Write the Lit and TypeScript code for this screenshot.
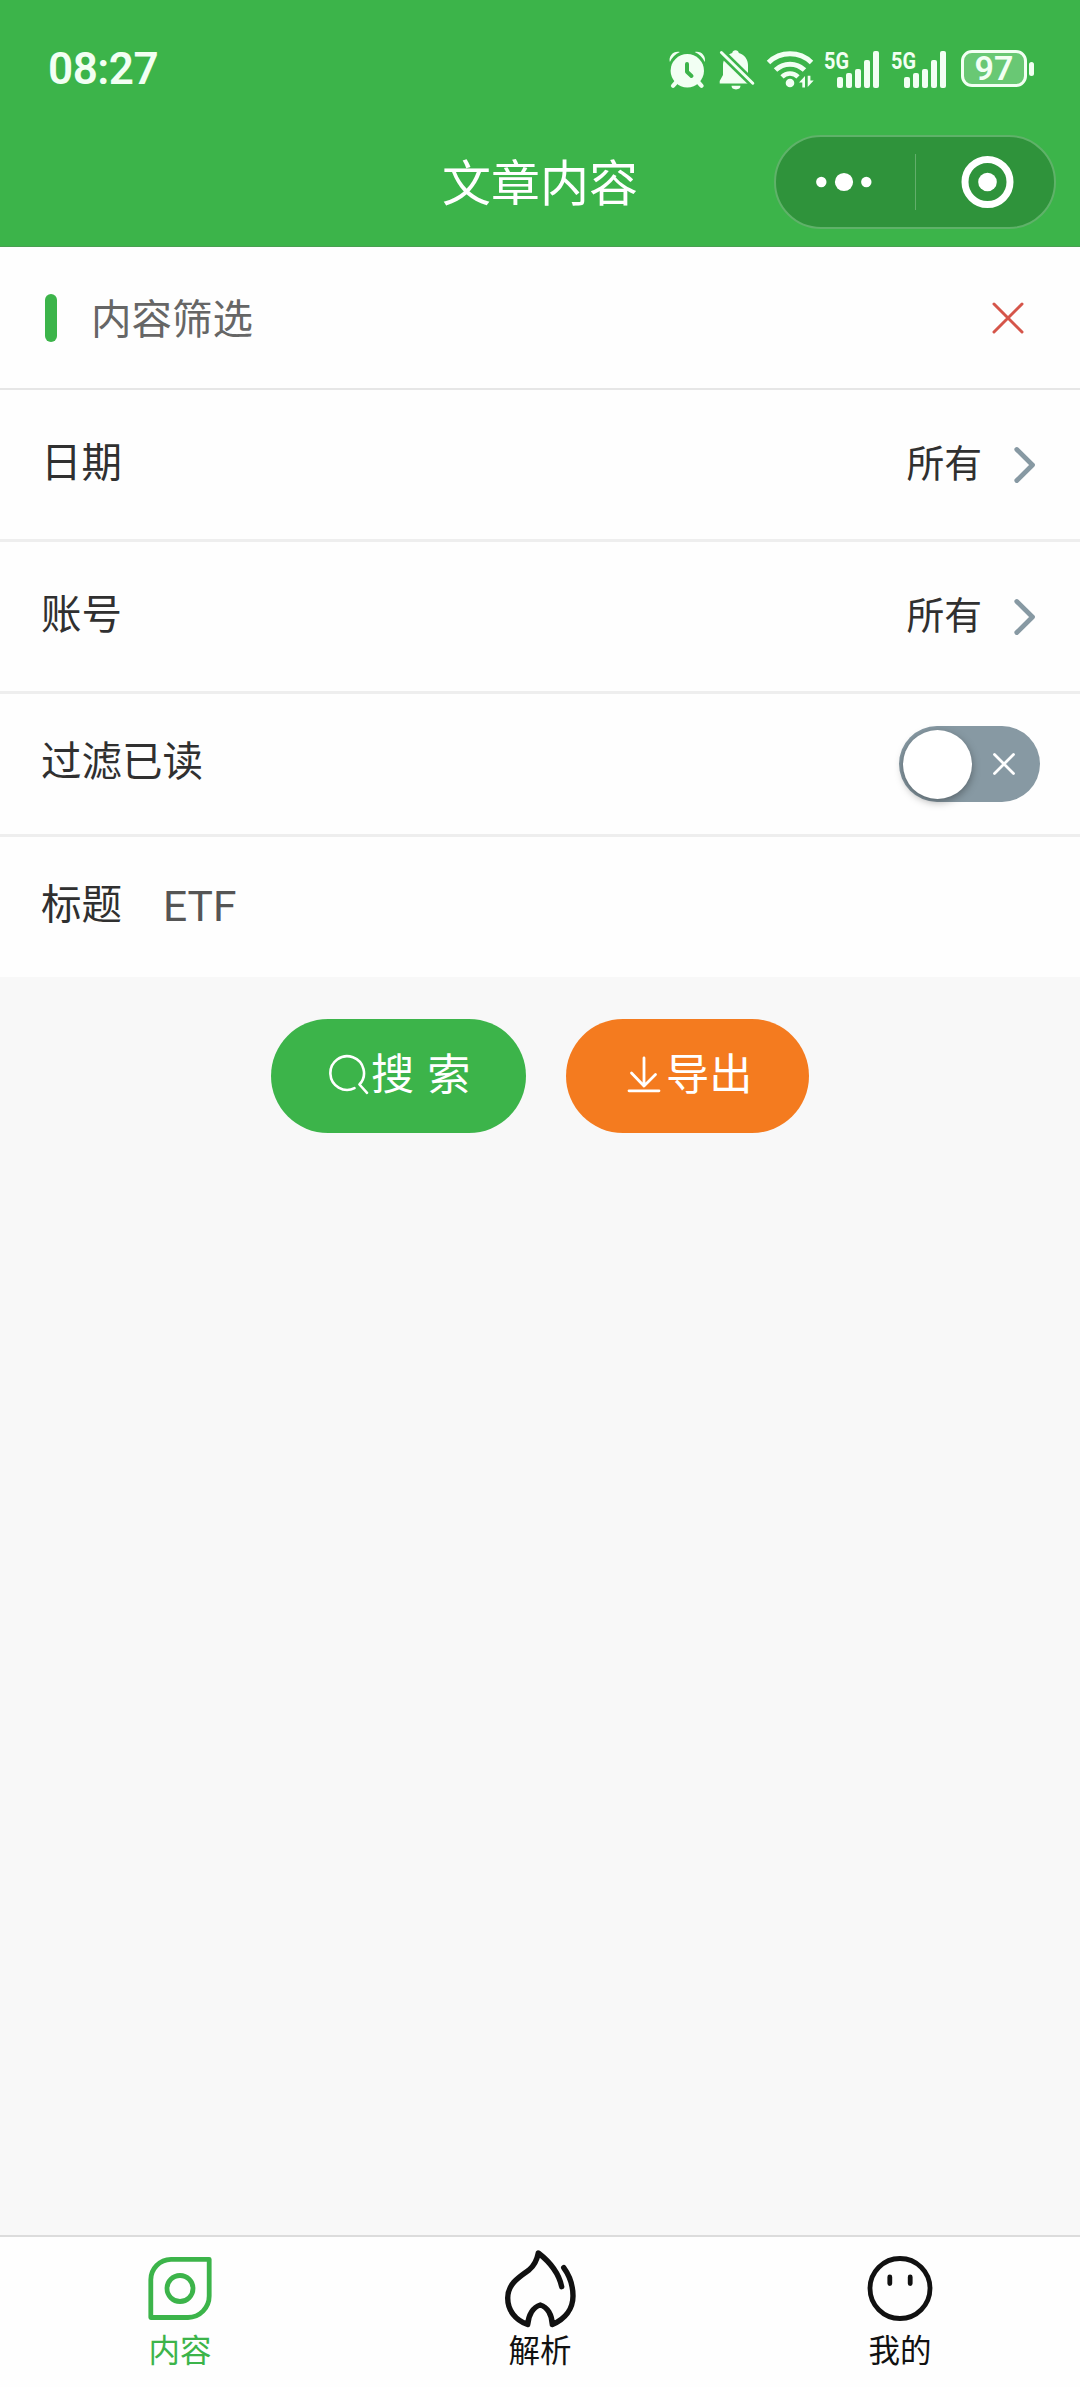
import { LitElement, html, css, svg } from "lit";
import { customElement, property } from "lit/decorators.js";

const alarmIcon = html`<svg width="40" height="40" viewBox="0 0 40 40">
  <g fill="#f2fff3">
    <circle cx="19.300" cy="21.700" r="16.700" />
    <path d="M1.900 13C.1 7 5.700 1.400 11.900 3a20 20 0 0 0-10 10z" />
    <path d="M36.700 13C38.500 7 32.900 1.400 26.700 3a20 20 0 0 1 10 10z" />
  </g>
  <path d="M8 33.500L5 36.800M30.600 33.500L33.600 36.800" stroke="#f2fff3" stroke-width="4.200" stroke-linecap="round" />
  <path d="M19 15V22.800L23.500 27" fill="none" stroke="#3cb44a" stroke-width="4" stroke-linecap="round" stroke-linejoin="round" />
</svg>`;

const bellIcon = html`<svg width="38" height="42" viewBox="0 0 38 42">
  <path fill="#f2fff3" d="M16.500 2.200a3.400 3.400 0 0 1 3.300 2.700C25.500 6.500 29 11.300 29 17v9.500l3 6v3H.7v-2.500L4 27V17C4 11.300 7.800 6.500 13.200 4.900a3.400 3.400 0 0 1 3.300-2.700zM12.500 37.800h9a4.500 3.600 0 0 1-9 0z" />
  <path d="M0 2.200L37 38.400" stroke="#3cb44a" stroke-width="8.200" />
  <path d="M2.400 4.500L33.800 35.200" stroke="#f2fff3" stroke-width="3" stroke-linecap="round" />
</svg>`;

const wifiIcon = html`<svg width="48" height="40" viewBox="0 0 48 40">
  <g fill="none" stroke="#f2fff3" stroke-width="5">
    <path d="M2.500 13.500A31 31 0 0 1 45.500 13.500" />
    <path d="M9.500 21A21 21 0 0 1 38.500 21" />
    <path d="M16 27.800A11.500 11.500 0 0 1 32 27.800" stroke-width="4.600" />
  </g>
  <circle cx="24" cy="34" r="4.300" fill="#f2fff3" />
  <path fill="#f2fff3" d="M33 33.500L39 27v11.500h-2.700v-5zM47.700 31.500L41.700 38V26.800h2.700v4.700z" />
</svg>`;

const bars = [
  [13, 28, 11],
  [22, 24, 15],
  [31, 20, 19],
  [40, 11, 28],
  [49, 2, 37],
];

@customElement("signal-meter")
class SignalMeter extends LitElement {
  static styles = css`
    :host { display: block; width: 62px; height: 60px; }
    svg { display: block; }
    .net { font: 700 24px/28px Roboto, "Noto Sans", sans-serif; fill: #f2fff3; }
  `;
  render() {
    return html`<svg width="62" height="60" viewBox="-4 -10 62 60">
      <text class="net" x="0" y="20" textLength="25" lengthAdjust="spacingAndGlyphs">5G</text>
      ${bars.map(([x, y, h]) => svg`<rect x=${x} y=${y} width="6" height=${h} rx="2" fill="#f2fff3" />`)}
    </svg>`;
  }
}

@customElement("status-bar")
class StatusBar extends LitElement {
  static styles = css`
    :host {
      display: flex;
      align-items: center;
      height: 135px;
      box-sizing: border-box;
      padding: 2px 46px 0 48px;
      color: #f2fff3;
      font-family: Roboto, "Noto Sans", sans-serif;
    }
    svg { display: block; }
    .time { flex: 1; font-size: 44px; font-weight: 600; line-height: 52px; letter-spacing: -0.5px; }
    .icons { display: flex; align-items: center; height: 60px; }
    .bell { margin-left: 11px; }
    .wifi { margin-left: 9px; }
    .sig { margin-left: 6px; }
    .sig2 { margin-left: 5px; }
    .battery { display: flex; align-items: center; gap: 2px; margin-left: 12px; }
    .cell {
      box-sizing: border-box;
      width: 66px;
      height: 37px;
      border: 3px solid #f2fff3;
      border-radius: 11px;
      background: #69c874;
      font-size: 34px;
      font-weight: 600;
      line-height: 31px;
      text-align: center;
    }
    .nub { width: 5px; height: 14px; border-radius: 3px; background: #f2fff3; }
  `;
  render() {
    return html`
      <div class="time">08:27</div>
      <div class="icons">
        ${alarmIcon}
        <div class="bell">${bellIcon}</div>
        <div class="wifi">${wifiIcon}</div>
        <signal-meter class="sig"></signal-meter>
        <signal-meter class="sig2"></signal-meter>
        <div class="battery"><div class="cell">97</div><div class="nub"></div></div>
      </div>
    `;
  }
}

@customElement("nav-bar")
class NavBar extends LitElement {
  @property() heading = "";
  static styles = css`
    :host {
      display: grid;
      grid-template-columns: 1fr auto 1fr;
      align-items: center;
      height: 112px;
      box-sizing: border-box;
      padding: 0 24px 17px;
      border-bottom: 1px solid #4a9e52;
    }
    .title {
      grid-column: 2;
      padding-bottom: 5px;
      color: #fff;
      font-size: 49px;
      line-height: 60px;
    }
    .capsule {
      justify-self: end;
      display: flex;
      align-items: center;
      box-sizing: border-box;
      width: 282px;
      height: 94px;
      border: 2px solid #5fb269;
      border-radius: 47px;
      background: #2f933b;
    }
    svg { display: block; }
    .half { flex: 1; display: flex; justify-content: center; }
    .divider { width: 1px; height: 56px; background: #63ae6b; }
  `;
  render() {
    return html`
      <div class="title">${this.heading}</div>
      <div class="capsule">
        <div class="half">
          <svg width="58" height="20" viewBox="0 0 58 20" fill="#fff">
            <circle cx="5.300" cy="10" r="5.200" /><circle cx="28" cy="10" r="9.100" /><circle cx="50.300" cy="10" r="5.200" />
          </svg>
        </div>
        <div class="divider"></div>
        <div class="half">
          <svg width="60" height="54" viewBox="0 0 60 54">
            <circle cx="32.500" cy="27" r="22.500" fill="none" stroke="#fff" stroke-width="7" />
            <circle cx="32.500" cy="27" r="9.300" fill="#fff" />
          </svg>
        </div>
      </div>
    `;
  }
}

@customElement("filter-panel")
class FilterPanel extends LitElement {
  static styles = css`
    :host { display: block; background: #fefefe; color: #303030; font-size: 40.500px; line-height: 60px; }
    svg { display: block; }
    .row {
      display: flex;
      align-items: center;
      box-sizing: border-box;
      padding: 0 40px 0 41px;
      border-bottom: 3px solid #eee;
    }
    .head { height: 143px; padding: 0 56px 0 45px; border-bottom: 2px solid #e6e6e6; color: #666; }
    .mark { width: 12px; height: 48px; border-radius: 6px; background: #3cb44a; }
    .name { flex: 1; padding: 0 0 2px 34px; }
    .pick { height: 152px; }
    .filter { height: 143px; }
    .search { height: 140px; border-bottom: 0; }
    .label { flex: 1; padding-bottom: 10px; }
    .value { font-size: 37.800px; padding: 0 32px 8px 0; }
    .search .label { flex: none; width: 122px; }
    .text { color: #555; font-family: Roboto, "Noto Sans", sans-serif; font-size: 42.500px; }
    .switch {
      display: flex;
      align-items: center;
      justify-content: space-between;
      box-sizing: border-box;
      width: 141px;
      height: 76px;
      padding: 0 24px 0 4px;
      border-radius: 38px;
      background: #8799a3;
    }
    .thumb { width: 69px; height: 69px; border-radius: 50%; background: #fff; box-shadow: 0 3px 8px rgba(0, 0, 0, 0.35); }
  `;

  private pickRow(label: string, value: string) {
    return html`<div class="row pick">
      <div class="label">${label}</div>
      <div class="value">${value}</div>
      <svg width="26" height="40" viewBox="0 0 26 40">
        <path d="M2.800 4.500L18.500 20L2.800 35.500" fill="none" stroke="#8799a3" stroke-width="4.800" stroke-linecap="round" stroke-linejoin="round" />
      </svg>
    </div>`;
  }

  render() {
    return html`
      <div class="row head">
        <div class="mark"></div>
        <div class="name">内容筛选</div>
        <svg width="32" height="32" viewBox="0 0 32 32">
          <path d="M2 2L30 30M30 2L2 30" stroke="#d5554a" stroke-width="3" stroke-linecap="round" />
        </svg>
      </div>
      ${this.pickRow("日期", "所有")}
      ${this.pickRow("账号", "所有")}
      <div class="row filter">
        <div class="label">过滤已读</div>
        <div class="switch">
          <div class="thumb"></div>
          <svg width="24" height="24" viewBox="0 0 24 24">
            <path d="M2.500 2.500L21.500 21.500M21.500 2.500L2.500 21.500" stroke="#fff" stroke-width="2.800" stroke-linecap="round" />
          </svg>
        </div>
      </div>
      <div class="row search">
        <div class="label">标题</div>
        <div class="text">ETF</div>
      </div>
    `;
  }
}

@customElement("action-buttons")
class ActionButtons extends LitElement {
  static styles = css`
    :host { display: flex; justify-content: center; gap: 40px; padding-top: 42px; }
    svg { display: block; }
    .btn {
      display: flex;
      align-items: center;
      box-sizing: border-box;
      height: 114px;
      border-radius: 57px;
      color: #fff;
      font-size: 43.200px;
      line-height: 60px;
      white-space: pre;
    }
    .green { width: 255px; padding-left: 57px; background: #3cb44a; }
    .orange { width: 243px; padding-left: 57px; background: #f47b1f; }
    .caption { padding-bottom: 10px; }
    .gap { margin-left: 13px; }
  `;
  render() {
    return html`
      <div class="btn green">
        <svg width="43" height="44" viewBox="0 0 43 44">
          <path d="M26.500 34.200A16.800 16.800 0 1 1 31.500 30.500L39 38.800" fill="none" stroke="#fff" stroke-width="2.600" stroke-linecap="round" stroke-linejoin="round" />
        </svg>
        <div class="caption">搜<span class="gap">索</span></div>
      </div>
      <div class="btn orange">
        <svg width="43" height="44" viewBox="0 0 43 44">
          <path d="M21 4V32M8.500 19L21 32L32.500 20.500M6 36.800H36" fill="none" stroke="#fff" stroke-width="2.800" stroke-linecap="round" stroke-linejoin="round" />
        </svg>
        <div class="caption">导出</div>
      </div>
    `;
  }
}

const tabs = [
  {
    label: "内容",
    active: true,
    icon: svg`<path d="M31 11.300H69.200V48A21.500 21.500 0 0 1 48 69.500H10.800V32A20.500 20.500 0 0 1 31 11.300Z" /><circle cx="40" cy="40.500" r="13" />`,
  },
  {
    label: "解析",
    active: false,
    icon: svg`<path stroke-width="5.400" d="M61.700 38.700C59 26 50 14 38.300 5C37 12 35 17 29 22C19 29 7.700 36 7.700 50C7.700 62 15 72 27.700 76.500C28.500 67 33 59 40.300 57C47.500 59 52 67 52.300 76.500C65 71 73 61 73 48C73 37 69 27 63.700 19.700" />`,
  },
  {
    label: "我的",
    active: false,
    icon: svg`<circle cx="40" cy="40.500" r="30" /><path d="M29.800 29V35.500M50.200 29V35.500" />`,
  },
];

@customElement("tab-bar")
class TabBar extends LitElement {
  static styles = css`
    :host {
      display: grid;
      grid-template-columns: repeat(3, 1fr);
      box-sizing: border-box;
      height: 152px;
      border-top: 2px solid #dcdcdc;
      background: #fefefe;
    }
    .tab { display: flex; flex-direction: column; align-items: center; padding-top: 11px; color: #111; }
    .active { color: #3cb44a; }
    svg { display: block; fill: none; stroke: currentColor; stroke-width: 4.800px; stroke-linecap: round; stroke-linejoin: round; }
    .label { font-size: 31.500px; line-height: 40px; }
  `;
  render() {
    return tabs.map(
      (t) => html`<div class="tab ${t.active ? "active" : ""}">
        <svg width="80" height="80" viewBox="0 0 80 80">${t.icon}</svg>
        <div class="label">${t.label}</div>
      </div>`,
    );
  }
}

@customElement("app-root")
class AppRoot extends LitElement {
  static styles = css`
    :host {
      display: flex;
      flex-direction: column;
      width: 1080px;
      height: 2387px;
      overflow: hidden;
      background: #f8f8f8;
      font-family: "Noto Sans CJK SC", "Noto Sans", sans-serif;
    }
    .top { background: #3cb44a; }
    .content { flex: 1; }
  `;
  render() {
    return html`
      <div class="top">
        <status-bar></status-bar>
        <nav-bar heading="文章内容"></nav-bar>
      </div>
      <div class="content">
        <filter-panel></filter-panel>
        <action-buttons></action-buttons>
      </div>
      <tab-bar></tab-bar>
    `;
  }
}
